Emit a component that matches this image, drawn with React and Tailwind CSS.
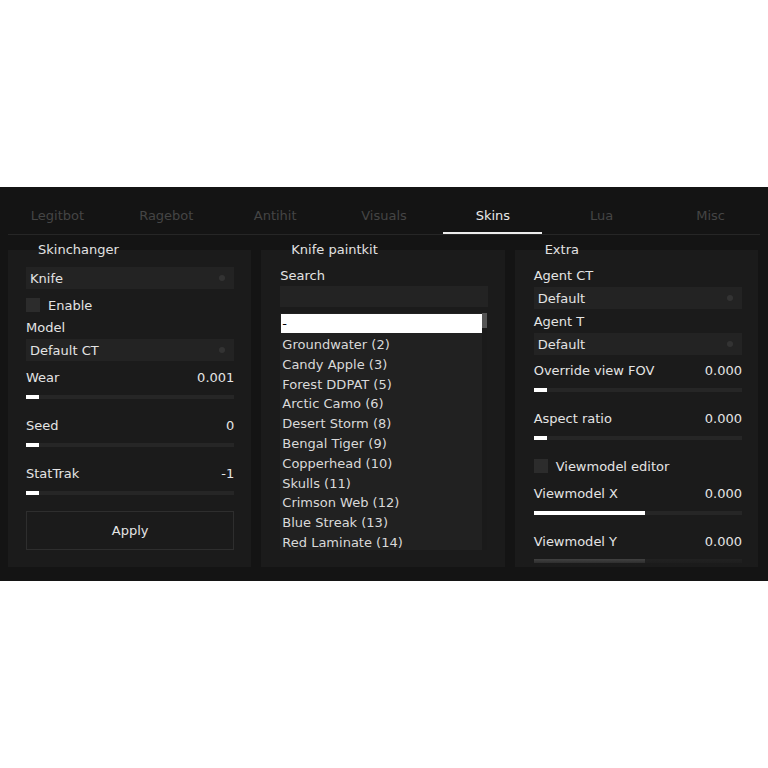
import React from 'react'

const tabs = ['Legitbot', 'Ragebot', 'Antihit', 'Visuals', 'Skins', 'Lua', 'Misc']

const paintkits = [
  'Groundwater (2)', 'Candy Apple (3)', 'Forest DDPAT (5)', 'Arctic Camo (6)', 'Desert Storm (8)',
  'Bengal Tiger (9)', 'Copperhead (10)', 'Skulls (11)', 'Crimson Web (12)', 'Blue Streak (13)',
  'Red Laminate (14)',
]

const Combo = ({ value, className = '' }) => (
  <div className={`flex items-center justify-between h-[22px] bg-[#232323] pl-[4px] pr-[9px] ${className}`}>
    <span className="leading-[17px]">{value}</span>
    <span className="w-[6px] h-[6px] rounded-full bg-[#333333]" />
  </div>
)

const Checkbox = ({ label, className = '' }) => (
  <div className={`flex items-center gap-[8px] h-[14px] ${className}`}>
    <span className="w-[14px] h-[14px] bg-[#2c2c2c]" />
    <span className="leading-[17px]">{label}</span>
  </div>
)

const Slider = ({ label, value, fill = 13, fillClass = 'bg-white', className = '' }) => (
  <div className={className}>
    <div className="flex justify-between leading-[17px]">
      <span>{label}</span>
      <span>{value}</span>
    </div>
    <div className="mt-[9px] h-[4px] bg-[#262626] flex items-center">
      <div className={`h-[4px] ${fillClass}`} style={{ width: fill }} />
    </div>
  </div>
)

const Panel = ({ title, titlePad = 'pl-[30px]', children }) => (
  <div className="flex-1 h-[317px] bg-[#1b1b1b] flex flex-col relative">
    <div className={`-mt-[9px] ${titlePad} leading-[17px] text-[#e2e2e2]`}>{title}</div>
    <div className="flex-1 overflow-hidden relative">{children}</div>
  </div>
)

export default function App() {
  return (
    <div
      className="h-[768px] w-[768px] bg-white flex items-center text-[13px] text-[#e4e4e4]"
      style={{ fontFamily: '"DejaVu Sans", Verdana, sans-serif' }}
    >
      <div className="w-full h-[394px] bg-[#141414] flex flex-col">
        {/* tabs */}
        <div className="flex px-[3px]">
          {tabs.map((t) => (
            <div key={t} className="flex-1 h-[47px] flex flex-col items-center">
              <span className={`pt-[20px] leading-[18px] ${t === 'Skins' ? 'text-[#e8e8e8]' : 'text-[#454545]'}`}>{t}</span>
              <div className="flex-1" />
              {t === 'Skins' && <div className="w-[99px] h-[2px] bg-[#ececec]" />}
            </div>
          ))}
        </div>
        <div className="mx-2 h-[1px] bg-[#262626]" />

        {/* panels */}
        <div className="mt-[15px] pl-2 pr-[10px] flex gap-[10px]">
          <Panel title="Skinchanger">
            <div className="pl-[18px] pr-[17px] flex flex-col">
              <Combo value="Knife" className="mt-[9px]" />
              <Checkbox label="Enable" className="mt-[9px]" />
              <div className="mt-[7px] leading-[17px]">Model</div>
              <Combo value="Default CT" className="mt-[3px]" />
              <Slider label="Wear" value="0.001" className="mt-[8px]" />
              <Slider label="Seed" value="0" className="mt-[18px]" />
              <Slider label="StatTrak" value="-1" className="mt-[18px]" />
              <button className="mt-[16px] h-[39px] border border-[#2e2e2e] text-[#e4e4e4]">Apply</button>
            </div>
          </Panel>

          <Panel title="Knife paintkit" titlePad="pl-[30px]">
            <div className="pl-[19px] pr-[17px] flex flex-col">
              <div className="mt-[9px] leading-[17px]">Search</div>
              <div className="mt-[2px] h-[21px] bg-[#232323]" />
              <div className="mt-[6px] h-[237px] w-[207px] bg-[#212121] flex overflow-hidden">
                <div className="flex-1 flex flex-col pt-[1px] pl-[1px] text-[#d9d9d9]">
                  <div className="h-[19px] mb-[2px] bg-white text-black leading-[19px] pl-[1px]">-</div>
                  {paintkits.map((p) => (
                    <div key={p} className="leading-[19.8px] pl-[1px]">{p}</div>
                  ))}
                </div>
                <div className="w-[5px] bg-[#1a1a1a] flex flex-col">
                  <div className="h-[15px] bg-[#555555]" />
                </div>
              </div>
            </div>
          </Panel>

          <Panel title="Extra">
            <div className="pl-[19px] pr-[16px] flex flex-col">
              <div className="mt-[9px] leading-[17px]">Agent CT</div>
              <Combo value="Default" className="mt-[3px]" />
              <div className="mt-[4px] leading-[17px]">Agent T</div>
              <Combo value="Default" className="mt-[3px]" />
              <Slider label="Override view FOV" value="0.000" className="mt-[7px]" />
              <Slider label="Aspect ratio" value="0.000" className="mt-[18px]" />
              <Checkbox label="Viewmodel editor" className="mt-[19px]" />
              <Slider label="Viewmodel X" value="0.000" fill={111} className="mt-[12px]" />
              <Slider label="Viewmodel Y" value="0.000" fill={111} fillClass="bg-[#5e5e5e]" className="mt-[18px]" />
            </div>
            <div className="absolute left-0 right-0 bottom-0 h-[14px] bg-gradient-to-b from-transparent to-[#1b1b1b]" />
          </Panel>
        </div>
      </div>
    </div>
  )
}
